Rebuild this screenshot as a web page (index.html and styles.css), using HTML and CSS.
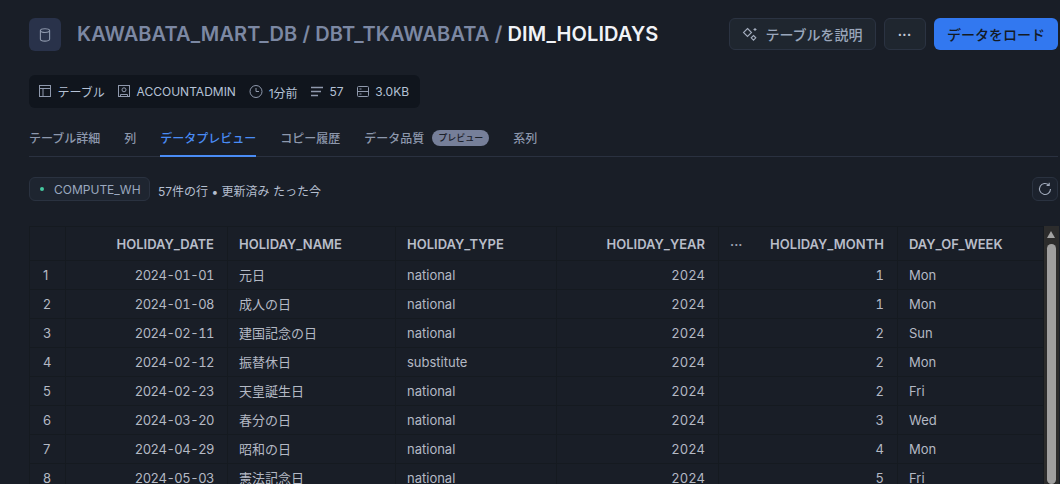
FILE: index.html
```html
<!DOCTYPE html>
<html lang="ja">
<head>
  <meta charset="UTF-8" />
  <title>DIM_HOLIDAYS</title>
  <link rel="stylesheet" href="styles.css">
</head>
<body>
  <div class="page">
    <div class="top-row">
      <div class="db-icon">
        <svg width="16" height="16" viewBox="0 0 16 16" fill="none" stroke="#8f99ad" stroke-width="1.1"><ellipse cx="8" cy="3.6" rx="4.6" ry="1.9"/><path d="M3.4 3.6v8.6c0 1.1 2 1.9 4.6 1.900s4.600-.8 4.600-1.900V3.600"/></svg>
      </div>
      <h1 class="title"><span class="crumb">KAWABATA_MART_DB / DBT_TKAWABATA / </span>DIM_HOLIDAYS</h1>
      <div class="actions">
        <button class="btn btn-explain">
          <svg width="16" height="16" viewBox="0 0 16 16" fill="none" stroke="#a3acbd" stroke-width="1.1"><path d="M5.500 2.500l4 4-4 4-4-4z"/><path d="M11.500 9.500l2.300 2.300-2.300 2.300-2.300-2.300z"/><path d="M13 2v3M11.500 3.500h3"/></svg>
          テーブルを説明
        </button>
        <button class="btn btn-more">•••</button>
        <button class="btn btn-load">データをロード</button>
      </div>
    </div>

    <div class="meta">
      <span class="meta-item">
        <svg width="13" height="13" viewBox="0 0 13 13" fill="none" stroke="#8f99ad"><rect x=".5" y=".5" width="11" height="11"/><path d="M.5 3.500h11M4 3.500v8"/></svg>
        テーブル
      </span>
      <span class="meta-item">
        <svg width="13" height="13" viewBox="0 0 13 13" fill="none" stroke="#8f99ad"><rect x=".5" y=".5" width="11" height="11"/><circle cx="6" cy="4.800" r="2"/><path d="M2.500 11.500V9.500h7v2"/></svg>
        ACCOUNTADMIN
      </span>
      <span class="meta-item">
        <svg width="14" height="14" viewBox="0 0 14 14" fill="none" stroke="#8f99ad"><circle cx="7" cy="6.500" r="6"/><path d="M7 3v3.500h3"/></svg>
        <span class="meta-low">1分前</span>
      </span>
      <span class="meta-item">
        <svg width="13" height="13" viewBox="0 0 13 13" fill="none" stroke="#8f99ad" stroke-width="1.600"><path d="M0 2.500h12M0 6.500h10M0 10.500h7"/></svg>
        57
      </span>
      <span class="meta-item">
        <svg width="13" height="13" viewBox="0 0 13 13" fill="none" stroke="#8f99ad"><rect x=".5" y="1.500" width="11" height="10" rx="1"/><path d="M.5 6.500h11M2.500 4h2M2.500 9h2"/></svg>
        3.0KB
      </span>
    </div>

    <nav class="tabs">
      <a class="tab">テーブル詳細</a>
      <a class="tab">列</a>
      <a class="tab active">データプレビュー</a>
      <a class="tab">コピー履歴</a>
      <a class="tab">データ品質<span class="badge">プレビュー</span></a>
      <a class="tab">系列</a>
    </nav>

    <div class="status-row">
      <span class="warehouse"><i class="dot"></i>COMPUTE_WH</span>
      <span class="status">57件の行 • 更新済み たった今</span>
      <button class="refresh">
        <svg width="14" height="14" viewBox="0 0 14 14" fill="none" stroke="#a3acbd" stroke-width="1.100"><path d="M12.500 7a5.500 5.500 0 1 1-1.700-4"/><path d="M11.200 .8v2.600H8.600"/></svg>
      </button>
    </div>

    <div class="grid-wrap">
      <table class="grid">
        <colgroup>
          <col class="c-num"><col class="c-date"><col class="c-name"><col class="c-type"><col class="c-year"><col class="c-month"><col class="c-dow">
        </colgroup>
        <thead>
          <tr>
            <th></th>
            <th class="right">HOLIDAY_DATE</th>
            <th>HOLIDAY_NAME</th>
            <th>HOLIDAY_TYPE</th>
            <th class="right">HOLIDAY_YEAR</th>
            <th class="right month-head"><span class="hidden-cols">···</span>HOLIDAY_MONTH</th>
            <th>DAY_OF_WEEK</th>
          </tr>
        </thead>
        <tbody>
          <tr><td>1</td><td class="right date">2024-01-01</td><td>元日</td><td>national</td><td class="right">2024</td><td class="right">1</td><td>Mon</td></tr>
          <tr><td>2</td><td class="right date">2024-01-08</td><td>成人の日</td><td>national</td><td class="right">2024</td><td class="right">1</td><td>Mon</td></tr>
          <tr><td>3</td><td class="right date">2024-02-11</td><td>建国記念の日</td><td>national</td><td class="right">2024</td><td class="right">2</td><td>Sun</td></tr>
          <tr><td>4</td><td class="right date">2024-02-12</td><td>振替休日</td><td>substitute</td><td class="right">2024</td><td class="right">2</td><td>Mon</td></tr>
          <tr><td>5</td><td class="right date">2024-02-23</td><td>天皇誕生日</td><td>national</td><td class="right">2024</td><td class="right">2</td><td>Fri</td></tr>
          <tr><td>6</td><td class="right date">2024-03-20</td><td>春分の日</td><td>national</td><td class="right">2024</td><td class="right">3</td><td>Wed</td></tr>
          <tr><td>7</td><td class="right date">2024-04-29</td><td>昭和の日</td><td>national</td><td class="right">2024</td><td class="right">4</td><td>Mon</td></tr>
          <tr><td>8</td><td class="right date">2024-05-03</td><td>憲法記念日</td><td>national</td><td class="right">2024</td><td class="right">5</td><td>Fri</td></tr>
        </tbody>
      </table>
      <div class="scrollbar">
        <span class="arrow"></span>
        <span class="thumb"></span>
      </div>
    </div>
  </div>
</body>
</html>
```

FILE: styles.css
```css
html, body {
  margin: 0;
  padding: 0;
  height: 484px;
  overflow: hidden;
  background-color: #191e27;
}
body {
  font-family: Inter, "Noto Sans CJK JP", sans-serif;
  font-size: 12px;
  color: #c4cad6;
}
.page {
  padding: 18px 2px 0 29px;
}
.top-row {
  display: flex;
  align-items: flex-start;
  height: 33px;
}
.db-icon {
  width: 32px;
  height: 33px;
  border-radius: 6px;
  background-color: #29324a;
  display: flex;
  align-items: center;
  justify-content: center;
}
.title {
  margin: 0 0 0 16px;
  font-size: 20px;
  line-height: 33px;
  font-weight: 600;
  letter-spacing: .1px;
  color: #f1f3f7;
  white-space: nowrap;
}
.crumb {
  color: #7c88a3;
}
.actions {
  margin-left: auto;
  display: flex;
  gap: 8px;
}
.btn {
  height: 32px;
  border-radius: 6px;
  font-family: inherit;
  font-size: 14px;
  font-weight: 500;
  padding: 0;
  border: 1px solid #2b3342;
  background-color: #1f262f;
  color: #9aa6bb;
  display: flex;
  align-items: center;
  justify-content: center;
}
.btn-explain {
  width: 147px;
  gap: 7px;
}
.btn-more {
  width: 42px;
  font-size: 7px;
  letter-spacing: 1px;
  color: #c4cad6;
}
.btn-load {
  width: 124px;
  border: none;
  background-color: #3278f0;
  color: #141a24;
}
.meta {
  margin-top: 24px;
  width: 391px;
  box-sizing: border-box;
  height: 33px;
  padding: 0 10px;
  display: flex;
  align-items: center;
  gap: 13.3px;
  border-radius: 6px;
  background-color: #10151d;
  color: #b5c2d6;
}
.meta-item {
  display: flex;
  align-items: center;
  gap: 5.5px;
  white-space: nowrap;
}
.meta-item svg {
  flex: none;
}
.meta-low {
  position: relative;
  top: 1px;
}
.tabs {
  margin-top: 15px;
  height: 33px;
  display: flex;
  gap: 24px;
  border-bottom: 1px solid #2a3140;
  font-weight: 500;
}
.tab {
  height: 33px;
  color: #8d98ad;
  display: flex;
  align-items: center;
  padding-bottom: 4px;
  box-sizing: border-box;
  white-space: nowrap;
}
.tab.active {
  color: #4a8cf5;
  border-bottom: 2px solid #4a8cf5;
  padding-bottom: 3px;
  height: 34px;
}
.badge {
  margin-left: 8px;
  padding: 0 6px;
  height: 16px;
  line-height: 16px;
  border-radius: 8px;
  font-size: 9px;
  background-color: #767f99;
  color: #1b2029;
}
.status-row {
  margin-top: 20px;
  display: flex;
  align-items: center;
  height: 24px;
}
.warehouse {
  width: 121px;
  height: 24px;
  box-sizing: border-box;
  padding-left: 10px;
  display: flex;
  align-items: center;
  gap: 10px;
  border: 1px solid #2a3240;
  border-radius: 6px;
  background-color: #1e2530;
  color: #9aa8bf;
}
.dot {
  width: 4px;
  height: 4px;
  border-radius: 50%;
  background-color: #45c9a0;
}
.status {
  margin-left: 8px;
  padding-top: 2px;
  color: #b5bfd0;
}
.refresh {
  margin-left: auto;
  width: 26px;
  height: 24px;
  padding: 0;
  border: 1px solid #2a3240;
  border-radius: 6px;
  background-color: #1c222d;
  display: flex;
  align-items: center;
  justify-content: center;
}
.grid-wrap {
  margin-top: 25px;
  display: flex;
}
.grid {
  width: 1014px;
  table-layout: fixed;
  border-collapse: collapse;
  font-size: 13px;
  color: #b4b9c4;
}
.c-num { width: 36px; }
.c-date { width: 162px; }
.c-name { width: 168px; }
.c-type { width: 161px; }
.c-year { width: 162px; }
.c-month { width: 179px; }
.c-dow { width: 146px; }
.grid th, .grid td {
  border: 1px solid #151a20;
  padding: 0 11px;
  text-align: left;
  white-space: nowrap;
  overflow: hidden;
  line-height: 16px;
}
.grid th {
  height: 33px;
  font-weight: 600;
  color: #b8bdc9;
}
.grid td {
  height: 28px;
}
.grid .right {
  text-align: right;
  padding-right: 13px;
}
.grid td.right {
  font-variant-numeric: tabular-nums;
}
.grid td.date {
  letter-spacing: -.5px;
}
.grid td:first-child {
  padding-left: 13px;
}
.month-head {
  position: relative;
}
.hidden-cols {
  position: absolute;
  left: 11px;
  top: 9px;
  color: #9aa3b2;
}
.scrollbar {
  width: 15px;
  height: 260px;
  background-color: #2c2c2c;
  position: relative;
  flex: none;
}
.arrow {
  position: absolute;
  top: 5px;
  left: 3px;
  border-left: 4.500px solid transparent;
  border-right: 4.500px solid transparent;
  border-bottom: 7px solid #a3a3a3;
}
.thumb {
  position: absolute;
  top: 18px;
  left: 3px;
  width: 9px;
  height: 240px;
  border-radius: 5px;
  background-color: #9f9f9f;
}
```
